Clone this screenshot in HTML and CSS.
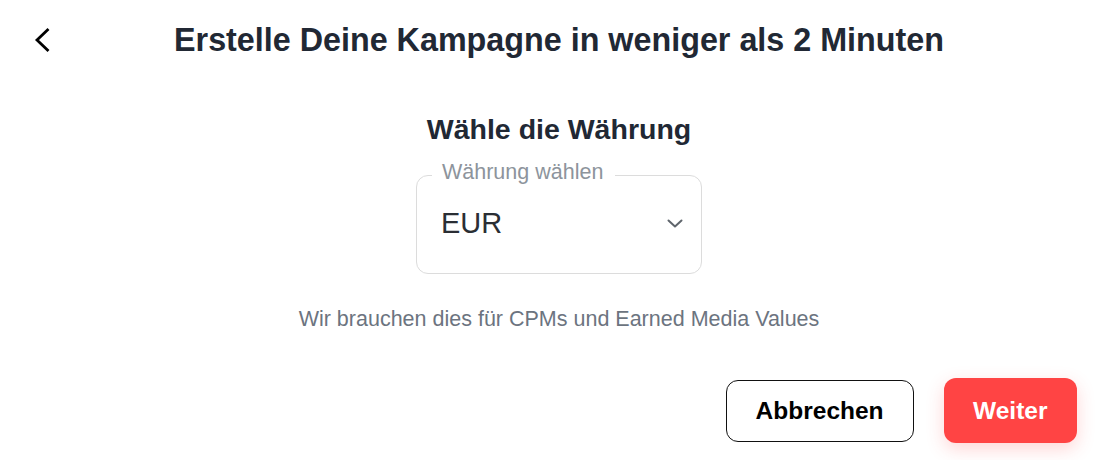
FILE: index.html
```html
<!DOCTYPE html>
<html lang="de">
<head>
<meta charset="utf-8">
<title>Kampagne erstellen</title>
<link rel="stylesheet" href="styles.css">
</head>
<body>
<div class="page">
  <header class="header">
    <button class="back" aria-label="Zurück">
      <svg width="16" height="26" viewBox="0 0 16 26"><path d="M14.5 2 L3 13 L14.5 24" fill="none" stroke="#000" stroke-width="2.8" stroke-linecap="butt" stroke-linejoin="miter"/></svg>
    </button>
    <h1 class="title">Erstelle Deine Kampagne in weniger als 2 Minuten</h1>
    <div class="spacer"></div>
  </header>
  <main class="content">
    <h2 class="heading">Wähle die Währung</h2>
    <div class="select">
      <span class="select-label">Währung wählen</span>
      <span class="select-value">EUR</span>
      <svg class="chevron" width="16" height="9" viewBox="0 0 16 9"><path d="M1.5 1.5 L8 7.5 L14.5 1.5" fill="none" stroke="#5f656c" stroke-width="2" stroke-linecap="round" stroke-linejoin="round"/></svg>
    </div>
    <p class="hint">Wir brauchen dies für CPMs und Earned Media Values</p>
  </main>
  <footer class="actions">
    <button class="btn btn-outline">Abbrechen</button>
    <button class="btn btn-primary">Weiter</button>
  </footer>
</div>
</body>
</html>
```
FILE: styles.css
```css
* { box-sizing: border-box; }
html, body { margin: 0; padding: 0; background: #fff; }
body { font-family: "Liberation Sans", Arial, sans-serif; }

.page { width: 1112px; height: 460px; }

.header {
  height: 80px;
  display: grid;
  grid-template-columns: 66px 1fr 66px;
  align-items: center;
}
.back {
  justify-self: start;
  margin-left: 34px;
  padding: 0;
  border: 0;
  background: none;
  display: flex;
  cursor: pointer;
}
.title {
  margin: 0;
  text-align: center;
  font-size: 32.3px;
  line-height: 37px;
  font-weight: 700;
  color: #212834;
  padding-left: 6px;
}

.content {
  display: flex;
  flex-direction: column;
  align-items: center;
  padding-left: 6px;
}
.heading {
  margin: 33px 0 0;
  font-size: 28.5px;
  line-height: 33px;
  font-weight: 700;
  color: #212834;
}
.select {
  position: relative;
  margin-top: 29px;
  width: 286px;
  height: 99px;
  border: 1px solid #dcdcdc;
  border-radius: 12px;
  display: flex;
  align-items: center;
  justify-content: space-between;
  padding: 0 18px 3px 24px;
}
.select-label {
  position: absolute;
  left: 15px;
  top: -16px;
  padding: 0 12px 0 10px;
  background: #fff;
  font-size: 21.5px;
  line-height: 24px;
  color: #8d949c;
}
.select-value {
  font-size: 29px;
  line-height: 33px;
  color: #2a2e34;
}
.chevron { display: block; }

.hint {
  margin: 33px 0 0;
  font-size: 21.5px;
  line-height: 25px;
  color: #6c7480;
}

.actions {
  display: flex;
  justify-content: flex-end;
  align-items: center;
  gap: 30px;
  padding-right: 35px;
  margin-top: 46px;
}
.btn {
  font-family: "Liberation Sans", Arial, sans-serif;
  font-weight: 700;
  font-size: 24.5px;
  border-radius: 12px;
  padding: 0 29px;
  cursor: pointer;
}
.btn-outline {
  height: 62px;
  background: #fff;
  border: 1px solid #111;
  color: #000;
}
.btn-primary {
  height: 65px;
  border: 0;
  background: #ff4444;
  color: #fff;
  padding: 0 29.5px;
  box-shadow: 0 6px 18px rgba(255, 68, 68, 0.22);
}
```
